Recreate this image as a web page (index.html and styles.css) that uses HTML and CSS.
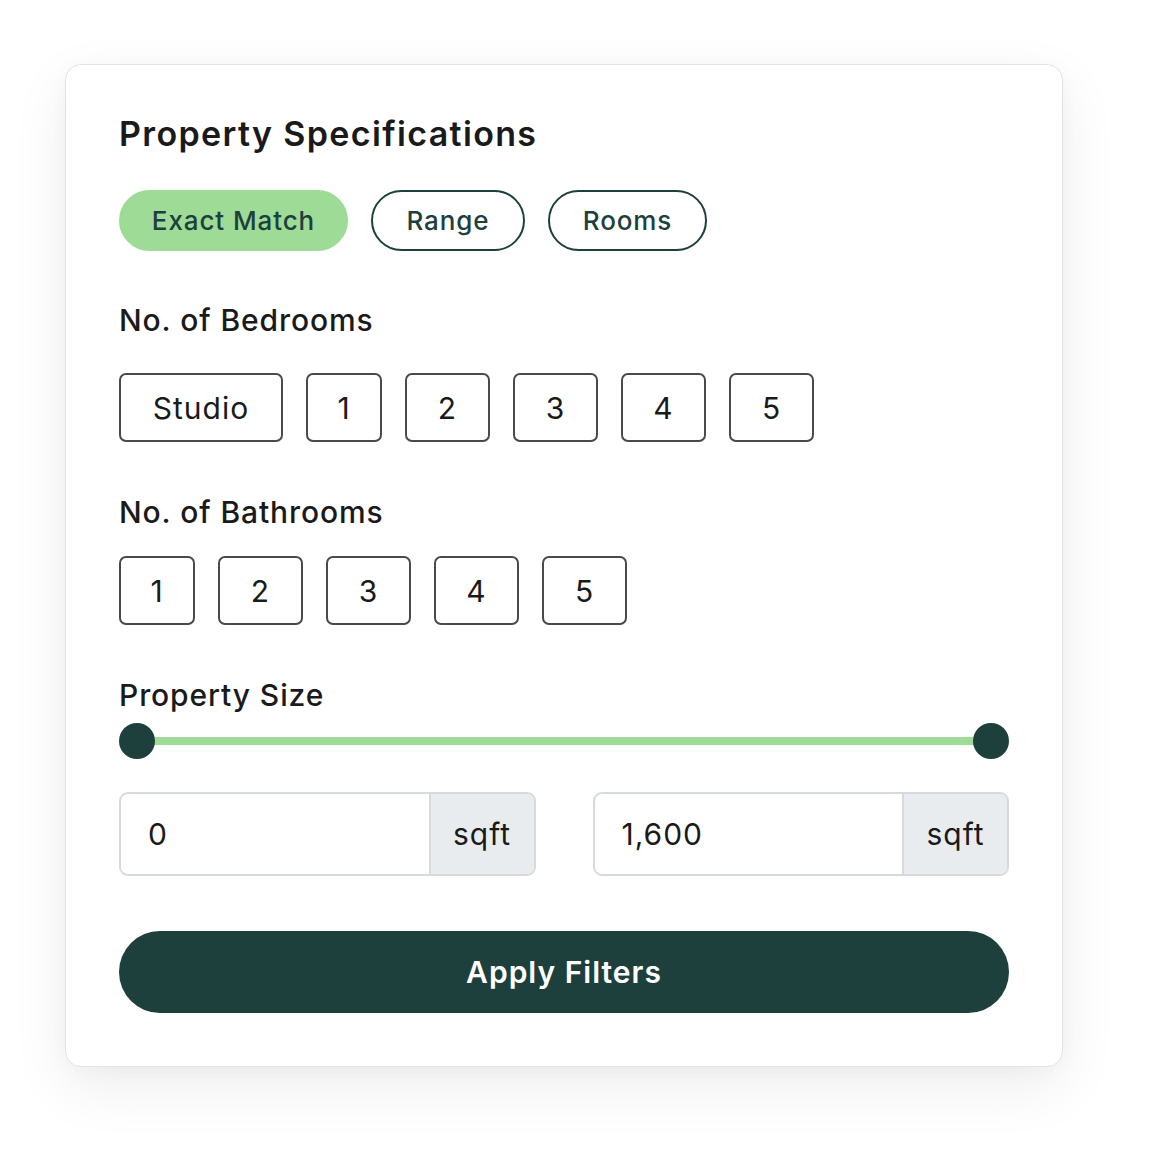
FILE: index.html
```html
<!DOCTYPE html>
<html lang="en">
<head>
<meta charset="utf-8">
<title>Property Specifications</title>
<link rel="stylesheet" href="styles.css">
</head>
<body>
<div class="page">
  <section class="card">
    <h1 class="title">Property Specifications</h1>
    <div class="pills">
      <button class="pill pill-active">Exact Match</button>
      <button class="pill">Range</button>
      <button class="pill">Rooms</button>
    </div>

    <h2 class="label label-bed">No. of Bedrooms</h2>
    <div class="options options-bed">
      <button class="opt opt-studio">Studio</button>
      <button class="opt opt-1">1</button>
      <button class="opt">2</button>
      <button class="opt">3</button>
      <button class="opt">4</button>
      <button class="opt">5</button>
    </div>

    <h2 class="label label-bath">No. of Bathrooms</h2>
    <div class="options options-bath">
      <button class="opt opt-1">1</button>
      <button class="opt">2</button>
      <button class="opt">3</button>
      <button class="opt">4</button>
      <button class="opt">5</button>
    </div>

    <h2 class="label label-size">Property Size</h2>
    <div class="slider">
      <div class="track"></div>
      <span class="thumb thumb-min"></span>
      <span class="thumb thumb-max"></span>
    </div>

    <div class="inputs">
      <div class="field">
        <span class="field-value">0</span>
        <span class="field-unit">sqft</span>
      </div>
      <div class="field">
        <span class="field-value">1,600</span>
        <span class="field-unit">sqft</span>
      </div>
    </div>

    <button class="apply">Apply Filters</button>
  </section>
</div>
</body>
</html>
```

FILE: styles.css
```css
* { box-sizing: border-box; }
html, body { margin: 0; padding: 0; background: #ffffff; }
body { font-family: "Inter", "Noto Sans", "DejaVu Sans", sans-serif; color: #1b1b1b; }

.page {
  width: 1160px;
  height: 1164px;
  padding: 64px 0 0 65px;
}

.card {
  width: 998px;
  height: 1003px;
  background: #fff;
  border: 1px solid #e3e3e3;
  border-radius: 16px;
  box-shadow: 0 20px 60px rgba(0,0,0,0.07), 0 4px 20px rgba(0,0,0,0.03);
  padding: 0 53px;
  display: flex;
  flex-direction: column;
}

.title {
  margin: 49px 0 0 0;
  height: 40px;
  line-height: 40px;
  font-size: 34px;
  font-weight: 600;
  color: #1a1a1a;
  letter-spacing: 1.35px;
}

.pills {
  margin-top: 36px;
  display: flex;
  gap: 23px;
}
.pill {
  height: 61px;
  border-radius: 31px;
  border: 2px solid #1e403d;
  background: #fff;
  color: #1e403d;
  font-family: inherit;
  font-size: 26px;
  font-weight: 500;
  letter-spacing: 0.9px;
  padding: 0;
}
.pill:nth-child(1) { width: 229px; }
.pill:nth-child(2) { width: 154px; }
.pill:nth-child(3) { width: 159px; }
.pill-active { background: #9ddb96; border-color: #9ddb96; }

.label {
  margin: 0;
  height: 40px;
  line-height: 40px;
  font-size: 30px;
  font-weight: 500;
  letter-spacing: 0.9px;
  color: #1a1a1a;
}
.label-bed { margin-top: 49px; }
.label-bath { margin-top: 50px; }
.label-size { margin-top: 50px; }

.options { display: flex; gap: 23px; }
.options-bed { margin-top: 33px; }
.options-bath { margin-top: 24px; }
.opt {
  height: 69px;
  width: 85px;
  border: 2px solid #4a4a4a;
  border-radius: 7px;
  background: #fff;
  color: #1a1a1a;
  font-family: inherit;
  font-size: 30px;
  font-weight: 400;
  letter-spacing: 1px;
  padding: 0;
}
.opt-studio { width: 164px; }
.opt-1 { width: 76px; }

.slider {
  margin-top: 8px;
  height: 36px;
  position: relative;
}
.track {
  position: absolute;
  left: 18px;
  right: 18px;
  top: 14px;
  height: 8px;
  background: #9ddb96;
}
.thumb {
  position: absolute;
  top: 0;
  width: 36px;
  height: 36px;
  border-radius: 50%;
  background: #1e403d;
}
.thumb-min { left: 0; }
.thumb-max { right: 0; }

.inputs {
  margin-top: 33px;
  display: flex;
  gap: 57px;
}
.field {
  flex: 1;
  height: 84px;
  border: 2px solid #d6dade;
  border-radius: 9px;
  display: flex;
  overflow: hidden;
}
.field-value {
  flex: 1;
  display: flex;
  align-items: center;
  padding-left: 27px;
  font-size: 30px;
  letter-spacing: 1px;
  color: #1a1a1a;
}
.field-unit {
  width: 105px;
  background: #e9ecef;
  border-left: 2px solid #d6dade;
  display: flex;
  align-items: center;
  justify-content: center;
  font-size: 30px;
  letter-spacing: 1px;
  color: #1a1a1a;
}

.apply {
  margin-top: 55px;
  height: 82px;
  border: none;
  border-radius: 41px;
  background: #1e403d;
  color: #fff;
  font-family: inherit;
  font-size: 30px;
  font-weight: 600;
  letter-spacing: 1px;
}
```
